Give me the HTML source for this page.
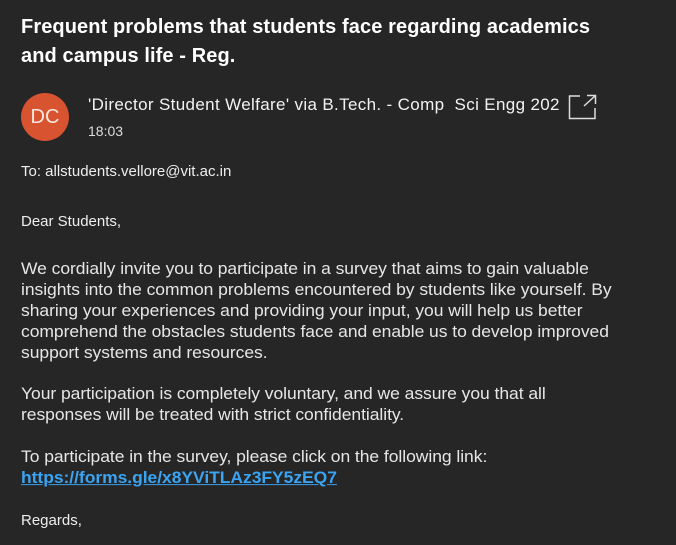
<!DOCTYPE html>
<html><head><style>
body{margin:0;width:676px;height:545px;background:#262626;color:#e8e8e8;font-family:"Liberation Sans",sans-serif;overflow:hidden;position:relative}
.a{position:absolute;white-space:nowrap}
.t{font-size:20px;color:#fff;left:21px;font-weight:bold;letter-spacing:0.1px}
.b{font-size:17.5px;left:21px;color:#e6e6e6;transform:scaleY(0.95);transform-origin:left top;letter-spacing:-0.05px}
</style></head><body>
<div class="a t" style="top:16px">Frequent problems that students face regarding academics</div>
<div class="a t" style="top:45px">and campus life - Reg.</div>
<div class="a" style="left:21px;top:93px;width:48px;height:48px;border-radius:50%;background:#d8532f;color:#fbe7df;font-size:20px;line-height:48px;text-align:center">DC</div>
<div class="a" style="left:88px;top:95px;font-size:17px;color:#f2f2f2;letter-spacing:0.35px">'Director Student Welfare' via B.Tech. - Comp&nbsp; Sci Engg 202</div>
<svg class="a" style="left:568px;top:94px" width="30" height="26" viewBox="0 0 30 26"><path d="M12 2H1.5V24.5H27V14" fill="none" stroke="#ddd" stroke-width="1.5"/><path d="M16 12L27 2M19 1.5H27.5V10" fill="none" stroke="#ddd" stroke-width="1.5"/></svg>
<div class="a" style="left:88px;top:123px;font-size:14px;color:#ddd">18:03</div>
<div class="a" style="left:21px;top:163px;font-size:15px;color:#eee">To: allstudents.vellore@vit.ac.in</div>
<div class="a" style="left:21px;top:213px;font-size:15px;color:#eee">Dear Students,</div>
<div class="a b" style="top:259px">We cordially invite you to participate in a survey that aims to gain valuable</div>
<div class="a b" style="top:280px">insights into the common problems encountered by students like yourself. By</div>
<div class="a b" style="top:301px">sharing your experiences and providing your input, you will help us better</div>
<div class="a b" style="top:322px">comprehend the obstacles students face and enable us to develop improved</div>
<div class="a b" style="top:343px">support systems and resources.</div>
<div class="a b" style="top:384px">Your participation is completely voluntary, and we assure you that all</div>
<div class="a b" style="top:405px">responses will be treated with strict confidentiality.</div>
<div class="a b" style="top:447px">To participate in the survey, please click on the following link:</div>
<div class="a b" style="top:468px;color:#3aa3f2;font-weight:bold;text-decoration:underline">https://forms.gle/x8YViTLAz3FY5zEQ7</div>
<div class="a" style="left:21px;top:512px;font-size:15px;color:#eee">Regards,</div>
</body></html>
